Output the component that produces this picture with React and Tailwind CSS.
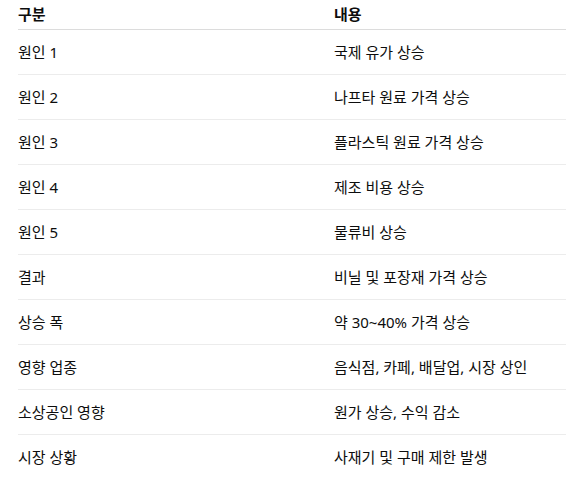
export default function App() {
  const rows = [
    ["원인 1", "국제 유가 상승"],
    ["원인 2", "나프타 원료 가격 상승"],
    ["원인 3", "플라스틱 원료 가격 상승"],
    ["원인 4", "제조 비용 상승"],
    ["원인 5", "물류비 상승"],
    ["결과", "비닐 및 포장재 가격 상승"],
    ["상승 폭", "약 30~40% 가격 상승"],
    ["영향 업종", "음식점, 카페, 배달업, 시장 상인"],
    ["소상공인 영향", "원가 상승, 수익 감소"],
    ["시장 상황", "사재기 및 구매 제한 발생"],
  ];
  return (
    <div
      className="bg-white w-[566px] h-[487px] overflow-hidden pl-[18px] text-[15px] text-[#0d0d0d]"
      style={{ fontFamily: '"Noto Sans", "Noto Sans CJK KR", sans-serif' }}
    >
      <div className="grid grid-cols-[316px_1fr] h-[30px] items-center border-b border-[#dcdcdc] font-bold">
        <div className="leading-none">구분</div>
        <div className="leading-none">내용</div>
      </div>
      {rows.map(([a, b], i) => (
        <div
          key={i}
          className={`grid grid-cols-[316px_1fr] h-[45px] items-center ${i < rows.length - 1 ? "border-b border-[#ececec]" : ""}`}
        >
          <div className="leading-none">{a}</div>
          <div className="leading-none">{b}</div>
        </div>
      ))}
    </div>
  );
}
